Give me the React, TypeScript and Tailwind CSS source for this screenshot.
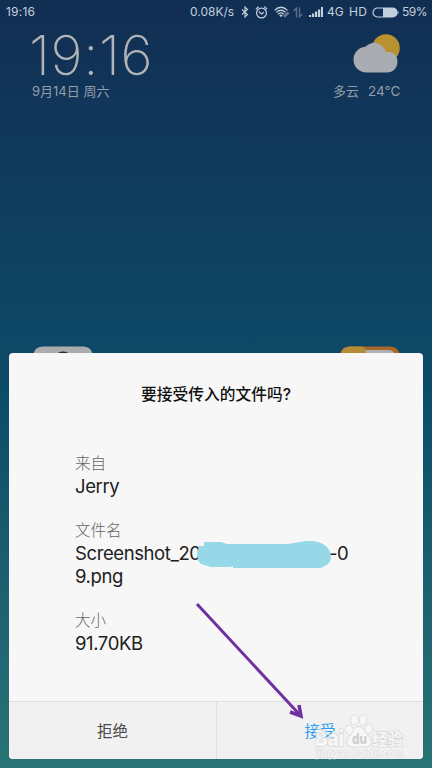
import React from 'react';

const FILE_DETAILS = [
  { label: '来自', lines: ['Jerry'] },
  { label: '文件名', lines: ['Screenshot_20', '9.png'] },
  { label: '大小', lines: ['91.70KB'] },
];

const StatusBar = () => (
  <div className="flex h-6 items-center justify-between pl-[6px] pr-[6px] text-[12px] leading-none text-[#c3cfdc]">
    <span className="w-[30px] whitespace-nowrap tracking-[0.2px]">19:16</span>
    <div className="flex items-center whitespace-nowrap">
      <span className="w-[45px]">0.08K/s</span>
      {/* bluetooth */}
      <svg className="ml-[6px] h-[12px] w-[8px]" viewBox="0 0 8 12" fill="none" stroke="currentColor" strokeWidth="1.100">
        <path d="M1 3.500 6.500 8.500 4 11V1l2.500 2.500L1 8.500" />
      </svg>
      {/* alarm */}
      <svg className="ml-[6px] h-[13px] w-[13px]" viewBox="0 0 12 13" fill="none" stroke="currentColor" strokeWidth="1.200" strokeLinecap="round">
        <circle cx="6" cy="7" r="4.900" />
        <path d="M.8 2.800 2.800 1M11.200 2.800 9.200 1M3.800 6 6 8l2-1.500" />
      </svg>
      {/* wifi */}
      <svg className="ml-[6px] h-[12px] w-[16px]" viewBox="0 0 16 12" fill="none" stroke="currentColor" strokeWidth="1.300">
        <path d="M.5 4.400Q7 -1.800 13.500 4.400M2.300 6.400Q7 2 11.700 6.400M4 8.300Q7 5.500 10 8.300" />
        <path d="M5.300 9.300Q7 7.800 8.700 9.300L7 11.200Z" fill="currentColor" stroke="none" />
        <path d="M10 10.800 14.500 6.500" opacity=".5" strokeWidth="2.500" />
      </svg>
      <svg className="ml-[3px] h-[11px] w-[10px] opacity-40" viewBox="0 0 10 11" fill="none" stroke="currentColor" strokeWidth="1.400">
        <path d="M3.500 10.500V1L.8 4M6.500.500V10l2.700-3" />
      </svg>
      {/* signal */}
      <svg className="ml-[6px] h-[10px] w-[14px]" viewBox="0 0 14 10" fill="currentColor">
        <path d="M0 8h2.200v2H0zM3 6.500h2.200V10H3zM6 4.500h2.200V10H6zM9 2.500h2.200V10H9zM12 0h2v10h-2z" />
      </svg>
      <span className="ml-[4px] w-[18px]">4G</span>
      <span className="ml-[4px] w-[18px] tracking-[0.3px]">HD</span>
      <svg className="ml-[5px] h-[11px] w-[28px]" viewBox="0 0 28 11">
        <rect x="1" y="1" width="24" height="9" rx="4.500" fill="none" stroke="currentColor" strokeWidth="1.200" />
        <path d="M11 1h10a4.500 4.500 0 0 1 0 9H11z" fill="currentColor" />
        <path d="M26 4q1.500 1.500 0 3z" fill="currentColor" />
      </svg>
      <span className="ml-[2px] w-[24px] tracking-[-0.5px]">59%</span>
    </div>
  </div>
);

const WeatherIcon = () => (
  <svg className="h-[40px] w-[48px]" viewBox="0 0 48 40">
    <circle cx="33" cy="14" r="13.800" fill="#b89130" />
    <path
      d="M14 38.500C6 38.500.5 33 .5 25.500S6.500 13 13 12.500C20 5.500 30 9 33 18.500 39.500 16.500 44.500 21 44.500 27.500S40 38.500 34 38.500Z"
      fill="#a9adb1"
    />
  </svg>
);

const ClockWeather = () => (
  <header className="flex h-[84px] justify-between pl-[32px] pr-[31px] text-[#929eab]">
    <div>
      <div className="-ml-[3px] mt-[4px] h-[54px] whitespace-nowrap text-[55px] font-extralight leading-[54px] tracking-[0.600px] text-[#b1b3b6]">19:16</div>
      <div className="mt-[1px] text-[13px] leading-4">9月14日 周六</div>
    </div>
    <div className="flex flex-col pt-[10px]">
      <div className="ml-[20px]">
        <WeatherIcon />
      </div>
      <div className="mt-[9px] flex gap-[9px] whitespace-nowrap text-[13px] leading-4">
        <span>多云</span>
        <span className="text-[13.500px]">24°C</span>
      </div>
    </div>
  </header>
);

// Home screen icons peeking out above the dialog
const HomeIcons = () => (
  <div className="mt-[238px] flex h-[7px] justify-between pl-[33px] pr-[32px]">
    <svg className="h-[7px] w-[60px]" viewBox="0 0 60 7">
      <path d="M0 12Q0 .5 10 .5H50Q60 .5 60 12Z" fill="#aaacae" />
      <ellipse cx="30" cy="8.500" rx="6" ry="3" fill="#27292b" />
    </svg>
    <svg className="h-[7px] w-[60px]" viewBox="0 0 60 7">
      <path d="M0 12Q0 .5 10 .5H50Q60 .5 60 12Z" fill="#a96725" />
      <path d="M0 12Q0 .5 10 .5H22Q26 2 27 7V12Z" fill="#b58b36" />
      <path d="M25 4H48Q54 4 55 9H27Z" fill="#aeb0b5" />
    </svg>
  </div>
);

const Scribble = () => (
  <svg className="absolute left-[122px] top-[-1px] h-[30px] w-[136px]" viewBox="0 0 136 30">
    <path
      d="M1 9 2 5H7V1H24L30 3H91L103 1Q117 -2 126 3 134 8 134 16 134 23 126 26L124 27H36V25L33 26H14L4 23Q0 19 0 14Z"
      fill="#96d7e8"
    />
  </svg>
);

const Watermark = () => (
  <svg className="pointer-events-none absolute left-[312px] top-[712px] h-[56px] w-[96px]" viewBox="0 0 96 56">
    <g fill="#f9f9f9" stroke="#d0d0d0" strokeWidth="1.500" style={{ paintOrder: 'stroke' }} opacity=".75">
      <ellipse cx="37.500" cy="18" rx="3.500" ry="4.700" transform="rotate(-15 37.500 18)" />
      <ellipse cx="42.500" cy="8" rx="3.500" ry="4.800" />
      <ellipse cx="51" cy="8" rx="3.500" ry="4.800" />
      <ellipse cx="56.500" cy="17" rx="3.500" ry="4.700" transform="rotate(15 56.500 17)" />
      <path d="M47 15C42 15 41 21 38 24 34 27 34 35 41 34.500H53C60 35 60 28 56 24 53 21 52 15 47 15Z" />
      <text x="3" y="34" fontSize="22" fontWeight="800" textLength="29" lengthAdjust="spacingAndGlyphs">Bai</text>
      <text x="60" y="33" fontSize="16" fontWeight="700" textLength="31" lengthAdjust="spacingAndGlyphs">经验</text>
      <text x="4" y="45" fontSize="10" fontWeight="600" strokeWidth="1" textLength="87" lengthAdjust="spacingAndGlyphs">jingyan.baidu.com</text>
    </g>
    <text x="40" y="32" fontSize="14" fontWeight="800" fill="#cecece" textLength="15" lengthAdjust="spacingAndGlyphs">du</text>
  </svg>
);

const TransferDialog = () => (
  <section className="mx-[9px] flex h-[406px] flex-col overflow-hidden rounded-[4px] bg-[#f7f7f7]">
    <h1 className="mt-[30px] text-center text-[15.700px] font-medium leading-6 tracking-[0.05px] text-[#111]">要接受传入的文件吗?</h1>
    <div className="mt-[45px] flex flex-1 flex-col gap-5 pl-[66px]">
      {FILE_DETAILS.map(({ label, lines }) => (
        <div key={label} className="text-[18.500px] font-[380] leading-[23.500px] tracking-[-0.400px] text-[#202020]">
          <div className="text-[15.500px] font-light leading-[23px] tracking-normal text-[#666]">{label}</div>
          {lines.map((line, i) => (
            <div key={line} className="relative whitespace-nowrap">
              {line}
              {label === '文件名' && i === 0 && (
                <>
                  <span className="absolute left-[254px]">-0</span>
                  <Scribble />
                </>
              )}
            </div>
          ))}
        </div>
      ))}
    </div>
    <div className="grid h-[58px] grid-cols-[208px_1fr] border-t border-[#dedede] bg-[#f1f1f1] text-[15.500px]">
      <button className="border-r border-[#dedede] pt-[2px] text-[#4b4b4b]">拒绝</button>
      <button className="pt-[2px] text-[#2a9df0]">接受</button>
    </div>
  </section>
);

const App = () => (
  <main
    className="relative h-[768px] w-[432px] overflow-hidden bg-linear-to-b from-[#112e53] via-[#0c4b68] to-[#297476]"
    style={{ fontFamily: 'Inter, "Noto Sans CJK SC", sans-serif' }}
  >
    <StatusBar />
    <ClockWeather />
    <HomeIcons />
    <TransferDialog />
    <svg className="pointer-events-none absolute left-[192px] top-[598px] h-[124px] w-[116px]" viewBox="0 0 116 124" fill="none" stroke="#7030a0" strokeWidth="3">
      <path d="M5 6 108 117" />
      <path d="M107 107 109 118 98 114" strokeWidth="3.500" />
    </svg>
    <Watermark />
  </main>
);

export default App;
